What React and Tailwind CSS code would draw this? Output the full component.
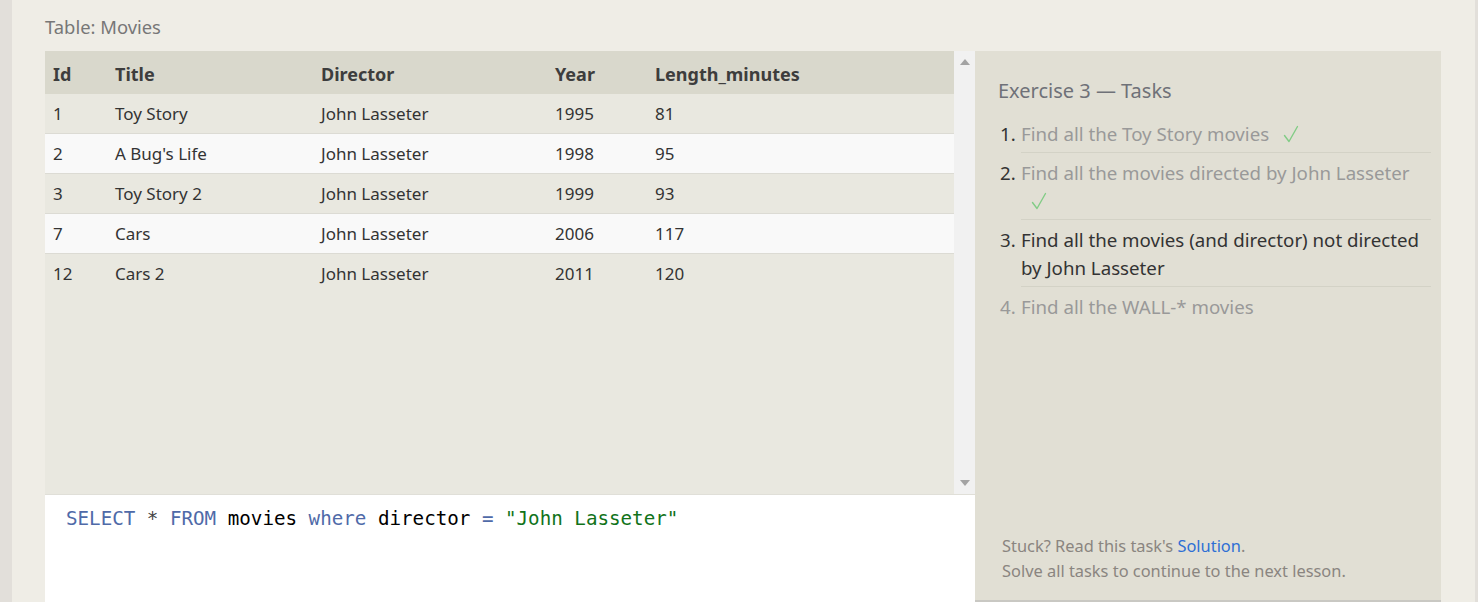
import React from "react";

const rows = [
  ["1", "Toy Story", "John Lasseter", "1995", "81"],
  ["2", "A Bug's Life", "John Lasseter", "1998", "95"],
  ["3", "Toy Story 2", "John Lasseter", "1999", "93"],
  ["7", "Cars", "John Lasseter", "2006", "117"],
  ["12", "Cars 2", "John Lasseter", "2011", "120"],
];

const cols = ["w-[62px]", "w-[206px]", "w-[234px]", "w-[100px]", "flex-1"];

function CheckMark() {
  return (
    <svg width="16" height="18" viewBox="0 0 16 18" className="inline-block align-[-2px]">
      <path d="M1.5 10.5 L6 16.5 L14.5 1.5" fill="none" stroke="#82cc86" strokeWidth="1.4" strokeLinecap="round" strokeLinejoin="round" />
    </svg>
  );
}

export default function App() {
  return (
    <div
      className="w-[1478px] h-[602px] flex bg-[#e2dfda] overflow-hidden text-[#333]"
      style={{ fontFamily: '"Noto Sans", "Open Sans", sans-serif' }}
    >
      <div className="ml-[12px] w-[1463px] h-full bg-[#efede6] pl-[33px] flex flex-col">
        <div className="h-[51px] pt-[13px] text-[18.4px] leading-[28px] text-[#777]">Table: Movies</div>
        <div className="flex flex-1 min-h-0">
          <div className="w-[930px] flex flex-col">
            <div className="h-[443px] flex bg-[#e9e8e0]">
              <div className="flex-1 flex flex-col">
                <div className="h-[43px] bg-[#d9d8cc] flex items-center pt-[4px] font-bold text-[18px] text-[#3d3d3d]">
                  {["Id", "Title", "Director", "Year", "Length_minutes"].map((h, i) => (
                    <div key={h} className={`${cols[i]} pl-[8px]`}>{h}</div>
                  ))}
                </div>
                {rows.map((r, ri) => (
                  <div
                    key={ri}
                    className={`h-[40px] flex items-center text-[17px] ${ri < rows.length - 1 ? "border-b border-[#dcdbd4]" : ""} ${ri % 2 === 1 ? "bg-[#f9f9f9]" : "bg-[#e9e8e0]"}`}
                  >
                    {r.map((c, i) => (
                      <div key={i} className={`${cols[i]} pl-[8px]`}>{c}</div>
                    ))}
                  </div>
                ))}
              </div>
              <div className="w-[21px] bg-[#f1f1f1] flex flex-col justify-between items-center py-[8px]">
                <svg width="10" height="6" viewBox="0 0 10 6"><path d="M0 6 L5 0 L10 6 Z" fill="#a3a3a3" /></svg>
                <svg width="10" height="6" viewBox="0 0 10 6"><path d="M0 0 L10 0 L5 6 Z" fill="#a3a3a3" /></svg>
              </div>
            </div>
            <div className="flex-1 bg-white border-t border-[#e0dfd8] pl-[21px] pt-[10px]">
              <div
                className="text-[19.2px] leading-[28px] whitespace-pre"
                style={{ fontFamily: '"DejaVu Sans Mono", "Liberation Mono", monospace' }}
              >
                <span className="text-[#4f6aa8]">SELECT</span>
                <span className="text-[#444]"> * </span>
                <span className="text-[#4f6aa8]">FROM</span>
                <span className="text-black"> movies </span>
                <span className="text-[#4f6aa8]">where</span>
                <span className="text-black"> director </span>
                <span className="text-[#4f6aa8]">=</span>
                <span className="text-[#11731a]"> "John Lasseter"</span>
              </div>
            </div>
          </div>
          <div className="w-[466px] bg-[#e1dfd4] border-b-2 border-[#c9c8c3] flex flex-col pl-[23px] pr-[10px]">
            <div className="pt-[26px] text-[20px] leading-[28px] text-[#6f7178]">Exercise 3 — Tasks</div>
            <ol className="mt-[15px] text-[18.7px] leading-[28px]">
              <li className="flex">
                <span className="w-[23px] pl-[2px] text-[#333]">1.</span>
                <div className="flex-1 text-[#999] pb-[4px] border-b border-[#d3d2c6]">Find all the Toy Story movies<span className="ml-[14px]"><CheckMark /></span></div>
              </li>
              <li className="flex mt-[6px]">
                <span className="w-[23px] pl-[2px] text-[#333]">2.</span>
                <div className="flex-1 text-[#999] pb-[4px] border-b border-[#d3d2c6]">
                  Find all the movies directed by John Lasseter
                  <div className="pl-[10px]"><CheckMark /></div>
                </div>
              </li>
              <li className="flex mt-[6px]">
                <span className="w-[23px] pl-[2px] text-[#333]">3.</span>
                <div className="flex-1 text-[#333] pb-[4px] border-b border-[#d3d2c6]">Find all the movies (and director) not directed by John Lasseter</div>
              </li>
              <li className="flex mt-[6px]">
                <span className="w-[23px] pl-[2px] text-[#999]">4.</span>
                <div className="flex-1 text-[#999]">Find all the WALL-* movies</div>
              </li>
            </ol>
            <div className="mt-auto pb-[17px] pl-[4px] text-[16.4px] leading-[25px] text-[#8a8580]">
              <div>Stuck? Read this task's <span className="text-[#2e6fd4]">Solution</span>.</div>
              <div>Solve all tasks to continue to the next lesson.</div>
            </div>
          </div>
        </div>
      </div>
    </div>
  );
}
